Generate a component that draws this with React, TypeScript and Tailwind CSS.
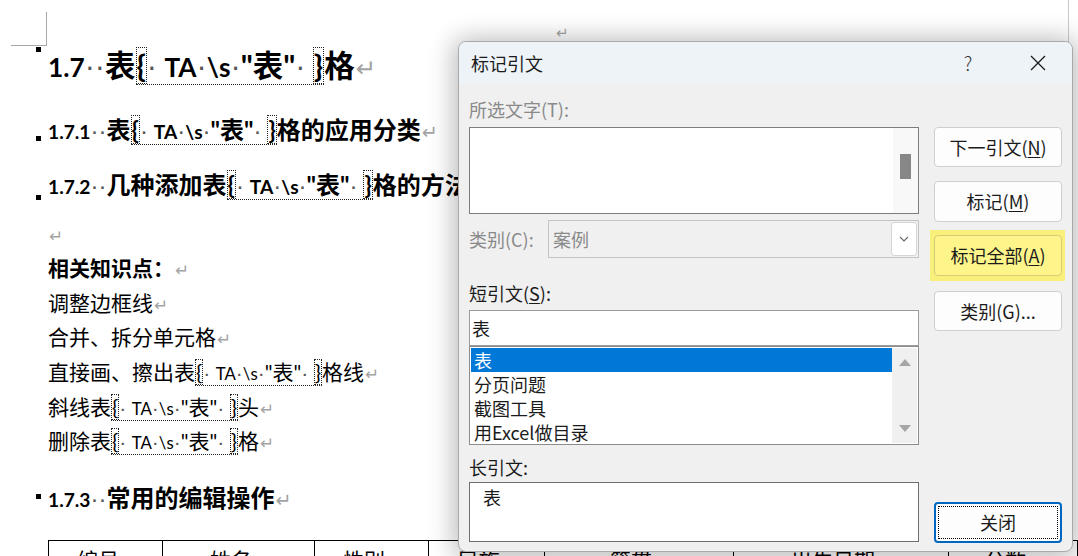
import React from 'react';

function D() {
  return <span className="text-[#555] font-['Liberation_Sans',sans-serif] font-normal">·</span>;
}

function L({ children, big = false }: { children: React.ReactNode; big?: boolean }) {
  return <span className={big ? 'text-[0.86em]' : 'text-[0.8em]'}>{children}</span>;
}

function Ret() {
  return <span className="font-normal text-[#a3a3a3] text-[0.8em] font-['DejaVu_Sans',sans-serif] ml-[1px]">↵</span>;
}

function Brace({ c }: { c: string }) {
  return <span className="inline-block border border-dotted border-[#222] leading-[1.15]">{c}</span>;
}

function Field({ big = false }: { big?: boolean }) {
  return (
    <span className="inline-block border-b border-dotted border-[#222] leading-[1.15]">
      <Brace c="{" />
      <D /> <L big={big}>TA</L><D /><L big={big}>\s</L><D />"表"<D /> <Brace c="}" />
    </span>
  );
}

function Mark({ top }: { top: string }) {
  return <span className={`absolute left-[-12px] w-[5px] h-[5px] bg-black ${top}`} />;
}

function Line({ className, children }: { className: string; children: React.ReactNode }) {
  return (
    <div className={`relative flex items-center whitespace-nowrap ${className}`}>
      <span>{children}</span>
    </div>
  );
}

function Btn({ children, className = '' }: { children: React.ReactNode; className?: string }) {
  return (
    <div className={`h-[40px] w-[128px] rounded-[4px] border border-[#cfcfcf] flex items-center justify-center ${className}`}>
      {children}
    </div>
  );
}

function Document() {
  const body = 'h-[34.6px] text-[21px]';
  return (
    <div className="pl-[48px] text-black font-['Lato','Noto_Sans_CJK_SC',sans-serif]">
      <div className="ml-[-37px] mt-[12px] w-[36px] h-[34px] border-r border-b border-[#a8a8a8]" />
      <div className="relative h-[40px] flex items-center whitespace-nowrap text-[30.5px] font-bold">
        <Mark top="top-[1px]" />
        <span><L big>1.7</L><D /><D />表<Field big />格<Ret /></span>
      </div>
      <div className="relative mt-[27px] h-[34px] flex items-center whitespace-nowrap text-[24px] font-bold">
        <Mark top="top-[23px]" />
        <span><L>1.7.1</L><D /><D />表<Field />格的应用分类<Ret /></span>
      </div>
      <div className="relative mt-[21px] h-[34px] flex items-center whitespace-nowrap text-[24px] font-bold">
        <Mark top="top-[27px]" />
        <span><L>1.7.2</L><D /><D />几种添加表<Field />格的方法<Ret /></span>
      </div>
      <Line className={`${body} mt-[14px]`}><Ret /></Line>
      <Line className={`${body} font-bold`}>相关知识点：<Ret /></Line>
      <Line className={body}>调整边框线<Ret /></Line>
      <Line className={body}>合并、拆分单元格<Ret /></Line>
      <Line className={body}>直接画、擦出表<Field />格线<Ret /></Line>
      <Line className={body}>斜线表<Field />头<Ret /></Line>
      <Line className={body}>删除表<Field />格<Ret /></Line>
      <div className="relative mt-[23px] h-[34px] flex items-center whitespace-nowrap text-[24px] font-bold">
        <Mark top="top-[13px]" />
        <span><L>1.7.3</L><D /><D />常用的编辑操作<Ret /></span>
      </div>
      <div className="mt-[25px] flex border-t border-l border-black text-[21px] whitespace-nowrap">
        {[
          ['编号', 'w-[115px]'],
          ['姓名', 'w-[152px]'],
          ['性别', 'w-[115px]'],
          ['民族', 'w-[116px]'],
          ['籍贯', 'w-[190px]'],
          ['出生日期', 'w-[216px]'],
          ['分数', 'w-[130px]'],
        ].map(([t, w]) => (
          <div key={t} className={`${w} h-[38px] border-r border-black flex items-center justify-center`}>
            <span>{t}<Ret /></span>
          </div>
        ))}
      </div>
    </div>
  );
}

function Dialog() {
  const label = 'h-[24px] flex items-center whitespace-nowrap';
  return (
    <div className="absolute left-[458px] top-[41px] w-[615px] h-[511px] rounded-[8px] border border-[#a9a9a9] bg-[#f0f0f0] shadow-[0_2px_26px_4px_rgba(0,0,0,0.28)] overflow-hidden text-[18px] text-[#1b1b1b]">
      <div className="h-[42px] bg-[#eef3f8] flex items-center pl-[12px] pr-[26px]">
        <span className="flex-1">标记引文</span>
        <span className="w-[20px] text-center text-[19px] font-light text-[#333] mr-[52px]">?</span>
        <svg width="16" height="16" viewBox="0 0 16 16">
          <path d="M1 1 L15 15 M15 1 L1 15" stroke="#1a1a1a" strokeWidth="1.3" fill="none" />
        </svg>
      </div>
      <div className="flex pl-[10px]">
        <div className="w-[450px] flex flex-col">
          <div className={`${label} mt-[13px] text-[#8a8a8a]`}>所选文字(T):</div>
          <div className="mt-[6px] h-[87px] border border-[#7d7d7d] bg-white flex justify-end">
            <div className="w-[25px] h-full bg-[#f8f8f8] pt-[26px] flex justify-center">
              <div className="w-[11px] h-[25px] bg-[#878787]" />
            </div>
          </div>
          <div className="mt-[6px] h-[38px] flex">
            <div className="w-[79px] flex items-center text-[#8a8a8a]">类别(C):</div>
            <div className="flex-1 border border-[#c4c4c4] flex items-center justify-between pl-[4px] pr-[1px]">
              <span className="text-[#8a8a8a]">案例</span>
              <div className="w-[26px] h-[34px] bg-white border border-[#d6d6d6] rounded-[3px] flex items-center justify-center">
                <svg width="10" height="6" viewBox="0 0 10 6">
                  <path d="M1 1 L5 5 L9 1" stroke="#6a6a6a" strokeWidth="1.1" fill="none" />
                </svg>
              </div>
            </div>
          </div>
          <div className={`${label} mt-[23px]`}>
            短引文(<span className="underline underline-offset-2">S</span>):
          </div>
          <div className="mt-[5px] h-[36px] border border-[#9c9c9c] bg-white flex items-center pl-[2px]">表</div>
          <div className="h-[99px] border border-[#8c8c8c] bg-white p-[1px] flex">
            <div className="flex-1 flex flex-col">
              <div className="h-[24px] bg-[#0078d7] text-white flex items-center pl-[3px]">表</div>
              <div className="h-[24px] flex items-center pl-[3px]">分页问题</div>
              <div className="h-[24px] flex items-center pl-[3px]">截图工具</div>
              <div className="h-[24px] flex items-center pl-[3px]">用Excel做目录</div>
            </div>
            <div className="w-[25px] bg-[#f0f0f0] flex flex-col items-center justify-between py-[11px]">
              <svg width="12" height="7" viewBox="0 0 12 7"><path d="M0 7 L6 0 L12 7 Z" fill="#a6a6a6" /></svg>
              <svg width="12" height="7" viewBox="0 0 12 7"><path d="M0 0 L6 7 L12 0 Z" fill="#a6a6a6" /></svg>
            </div>
          </div>
          <div className={`${label} mt-[10px]`}>长引文:</div>
          <div className="mt-[3px] h-[60px] border border-[#6e6e6e] bg-white pl-[13px] pt-[1px]">表</div>
        </div>
        <div className="ml-[15px] w-[128px] flex flex-col">
          <Btn className="mt-[43px] bg-[#fdfdfd]">
            下一引文(<span className="underline underline-offset-2">N</span>)
          </Btn>
          <Btn className="mt-[14px] h-[41px] bg-[#fdfdfd]">
            标记(<span className="underline underline-offset-2">M</span>)
          </Btn>
          <div className="mt-[8px] -ml-[4px] w-[135px] pl-[4px] py-[5px] bg-[#f8f07a]">
            <Btn className="h-[41px] bg-[#fdf58a] border-[#d3cc74]">
              标记全部(<span className="underline underline-offset-2">A</span>)
            </Btn>
          </div>
          <Btn className="mt-[10px] bg-[#fdfdfd]">类别(G)...</Btn>
          <div className="mt-[171px] h-[41px] w-[128px] rounded-[4px] border-2 border-[#0067c0] bg-[#fdfdfd] p-[2px]">
            <div className="w-full h-full border border-dotted border-black flex items-center justify-center">关闭</div>
          </div>
        </div>
      </div>
    </div>
  );
}

export default function App() {
  return (
    <div className="relative w-[1078px] h-[556px] overflow-hidden bg-white font-['Noto_Sans_CJK_SC','Noto_Sans',sans-serif]">
      <Document />
      <span className="absolute left-[556px] top-[22px] text-[15px] text-[#a3a3a3] font-['DejaVu_Sans',sans-serif]">↵</span>
      <div className="absolute left-[1068px] top-0 w-px h-[44px] bg-[#c8c8c8]" />
      <Dialog />
    </div>
  );
}
